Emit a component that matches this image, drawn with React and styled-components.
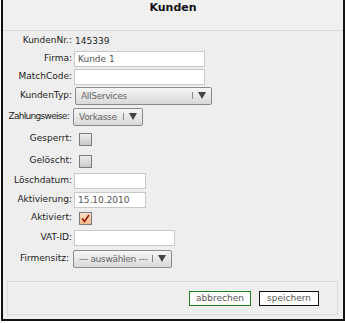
import React from "react";
import styled, { createGlobalStyle } from "styled-components";

const GlobalStyle = createGlobalStyle`
    body {
        margin: 0;
        background: #fff;
        font-family: "DejaVu Sans", Verdana, sans-serif;
    }
`;

const Frame = styled.div`
    box-sizing: border-box;
    margin-left: 1px;
    width: 344px;
    height: 321px;
    border: 2px solid #111;
    border-top: none;
    background: #eeeeee;
    display: flex;
    flex-direction: column;
`;

const Header = styled.div`
    height: 31px;
    border-bottom: 1px solid #d9d9d9;
    background: #f0f0f0;
    text-align: center;
    font-size: 11px;
    font-weight: bold;
    color: #111;
    padding-top: 1px;
    box-sizing: border-box;
`;

const Form = styled.div`
    padding-top: 2px;
    display: flex;
    flex-direction: column;
`;

const Row = styled.div`
    display: flex;
    align-items: center;
    height: ${p => p.h}px;
`;

const Label = styled.div`
    flex-shrink: 0;
    width: ${p => (p.wide ? 66 : 69)}px;
    text-align: right;
    white-space: nowrap;
    font-size: 9px;
    letter-spacing: ${p => (p.tight ? "-0.7px" : "0")};
    color: #222;
    margin-top: -2px;
    margin-right: ${p => (p.wide ? 4 : 2)}px;
`;

const Value = styled.div`
    font-size: 9px;
    color: #222;
    margin-left: 1px;
    margin-top: -1px;
`;

const Input = styled.div`
    box-sizing: border-box;
    width: ${p => p.w}px;
    height: 16px;
    border: 1px solid #c8c8c8;
    background: #fff;
    font-size: 9px;
    color: #555;
    padding: 2px 3px 0;
    line-height: 11px;
`;

const Select = styled.div`
    box-sizing: border-box;
    width: ${p => p.w}px;
    height: 18px;
    margin-left: ${p => p.ml || 0}px;
    border: 1px solid #8a8a8a;
    border-radius: 2px;
    background: linear-gradient(#f6f6f6, #d9d9d9);
    display: flex;
    align-items: center;
    padding: 0 5px;
    font-size: 9px;
    color: #666;
    span.text {
        flex: 1;
        white-space: nowrap;
        overflow: hidden;
        letter-spacing: -0.3px;
    }
    span.sep {
        flex-shrink: 0;
        width: 1px;
        height: 7px;
        background: #888;
        margin: 0 5px 0 3px;
    }
    svg {
        flex-shrink: 0;
    }
`;

const Check = styled.div`
    box-sizing: border-box;
    width: 13px;
    height: 13px;
    margin-left: 5px;
    border: 1px solid #7a7a7a;
    background: ${p => (p.checked ? "linear-gradient(#fbe0c8, #f2b88c)" : "linear-gradient(#eeeeee, #c9c9c9)")};
    display: flex;
    align-items: center;
    justify-content: center;
`;

const Footer = styled.div`
    box-sizing: border-box;
    margin: 13px 5px 0 4px;
    height: 34px;
    border: 1px solid #d9d9d9;
    display: flex;
    justify-content: flex-end;
    align-items: center;
    gap: 8px;
    padding-right: 18px;
`;

const Button = styled.button`
    box-sizing: border-box;
    width: ${p => p.w}px;
    height: 15px;
    padding: 0;
    background: #fff;
    border: 1px solid ${p => (p.green ? "#1c7d1c" : "#111")};
    font-family: "DejaVu Sans", Verdana, sans-serif;
    font-size: 9px;
    color: #555;
    line-height: 11px;
`;

const Arrow = () => (
    <svg width="8" height="7" viewBox="0 0 8 7">
        <path d="M0 0 H8 L4 7 Z" fill="#444" />
    </svg>
);

const Tick = () => (
    <svg width="9" height="9" viewBox="0 0 9 9">
        <path d="M1 4.5 L3.5 7.5 L8 1" fill="none" stroke="#9a1a00" strokeWidth="1.6" />
    </svg>
);

const Dropdown = ({ w, ml, children }) => (
    <Select w={w} ml={ml}>
        <span className="text">{children}</span>
        <span className="sep" />
        <Arrow />
    </Select>
);

export default function App() {
    return (
        <Frame>
            <GlobalStyle />
            <Header>Kunden</Header>
            <Form>
                <Row h={16}><Label>KundenNr.:</Label><Value>145339</Value></Row>
                <Row h={19}><Label>Firma:</Label><Input w={131}>Kunde 1</Input></Row>
                <Row h={17}><Label>MatchCode:</Label><Input w={131} /></Row>
                <Row h={21}><Label>KundenTyp:</Label><Dropdown w={137} ml={1}>AllServices</Dropdown></Row>
                <Row h={21}><Label wide tight>Zahlungsweise:</Label><Dropdown w={70}>Vorkasse</Dropdown></Row>
                <Row h={24}><Label>Gesperrt:</Label><Check /></Row>
                <Row h={20}><Label>Gelöscht:</Label><Check /></Row>
                <Row h={19}><Label>Löschdatum:</Label><Input w={72} /></Row>
                <Row h={19}><Label>Aktivierung:</Label><Input w={72}>15.10.2010</Input></Row>
                <Row h={18}><Label>Aktiviert:</Label><Check checked><Tick /></Check></Row>
                <Row h={22}><Label>VAT-ID:</Label><Input w={101} /></Row>
                <Row h={19}><Label wide>Firmensitz:</Label><Dropdown w={99}>--- auswählen ---</Dropdown></Row>
            </Form>
            <Footer>
                <Button green w={62}>abbrechen</Button>
                <Button w={60}>speichern</Button>
            </Footer>
        </Frame>
    );
}
